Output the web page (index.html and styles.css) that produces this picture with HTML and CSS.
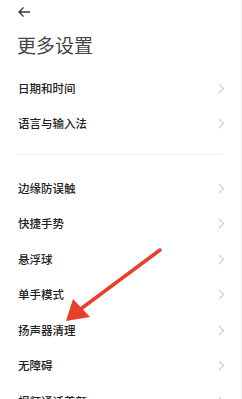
FILE: index.html
```html
<!DOCTYPE html>
<html lang="zh-CN">

<head>
    <meta charset="UTF-8">
    <meta name="viewport" content="width=device-width, initial-scale=1.0">
    <title>更多设置</title>
    <link rel="stylesheet" href="styles.css">
</head>

<body>
    <div class="screen">
        <div class="header">
            <svg class="back" width="14" height="12" viewBox="0 0 14 12">
                <path d="M13 6H2M6.5 1.5L2 6l4.5 4.5" fill="none" stroke="#333" stroke-width="1.3" />
            </svg>
            <h1 class="title">更多设置</h1>
        </div>

        <div class="group first">
            <div class="row"><span>日期和时间</span><i class="chev"></i></div>
            <div class="row"><span>语言与输入法</span><i class="chev"></i></div>
        </div>

        <div class="divider"></div>

        <div class="group">
            <div class="row"><span>边缘防误触</span><i class="chev"></i></div>
            <div class="row"><span>快捷手势</span><i class="chev"></i></div>
            <div class="row"><span>悬浮球</span><i class="chev"></i></div>
            <div class="row"><span>单手模式</span><i class="chev"></i></div>
            <div class="row"><span>扬声器清理</span><i class="chev"></i></div>
            <div class="row"><span>无障碍</span><i class="chev"></i></div>
            <div class="row"><span>视频通话美颜</span><i class="chev"></i></div>
        </div>

        <svg class="pointer" width="242" height="399" viewBox="0 0 242 399">
            <line x1="160" y1="250" x2="82" y2="308" stroke="#e8402a" stroke-width="3.5" stroke-linecap="round" />
            <polygon points="66,321 73,299 90,317" fill="#e8402a" />
        </svg>
    </div>
</body>

</html>
```

FILE: styles.css
```css
body {
    margin: 0;
    background: #fff;
    font-family: "Noto Sans CJK SC", "Noto Sans", sans-serif;
}

.screen {
    position: relative;
    width: 242px;
    height: 399px;
    overflow: hidden;
    border-right: 1px solid #f2f2f2;
    box-sizing: border-box;
}

.header {
    padding: 6px 0 0 17px;
}

.header .back {
    display: block;
}

.title {
    margin: 15px 0 0;
    font-size: 19px;
    line-height: 24px;
    font-weight: 400;
    color: #444;
}

.group.first {
    margin-top: 13px;
}

.row {
    display: flex;
    align-items: center;
    justify-content: space-between;
    height: 35.5px;
    padding: 0 19px 0 18px;
    font-size: 11.5px;
    font-weight: 500;
    color: #222;
}

.chev {
    width: 5.5px;
    height: 5.5px;
    border-top: 1px solid #c4c4c4;
    border-right: 1px solid #c4c4c4;
    transform: rotate(45deg);
}

.divider {
    height: 1px;
    margin: 13px 18px 15px 16px;
    background: #f0f0f0;
}

.pointer {
    position: absolute;
    left: 0;
    top: 0;
}
```
